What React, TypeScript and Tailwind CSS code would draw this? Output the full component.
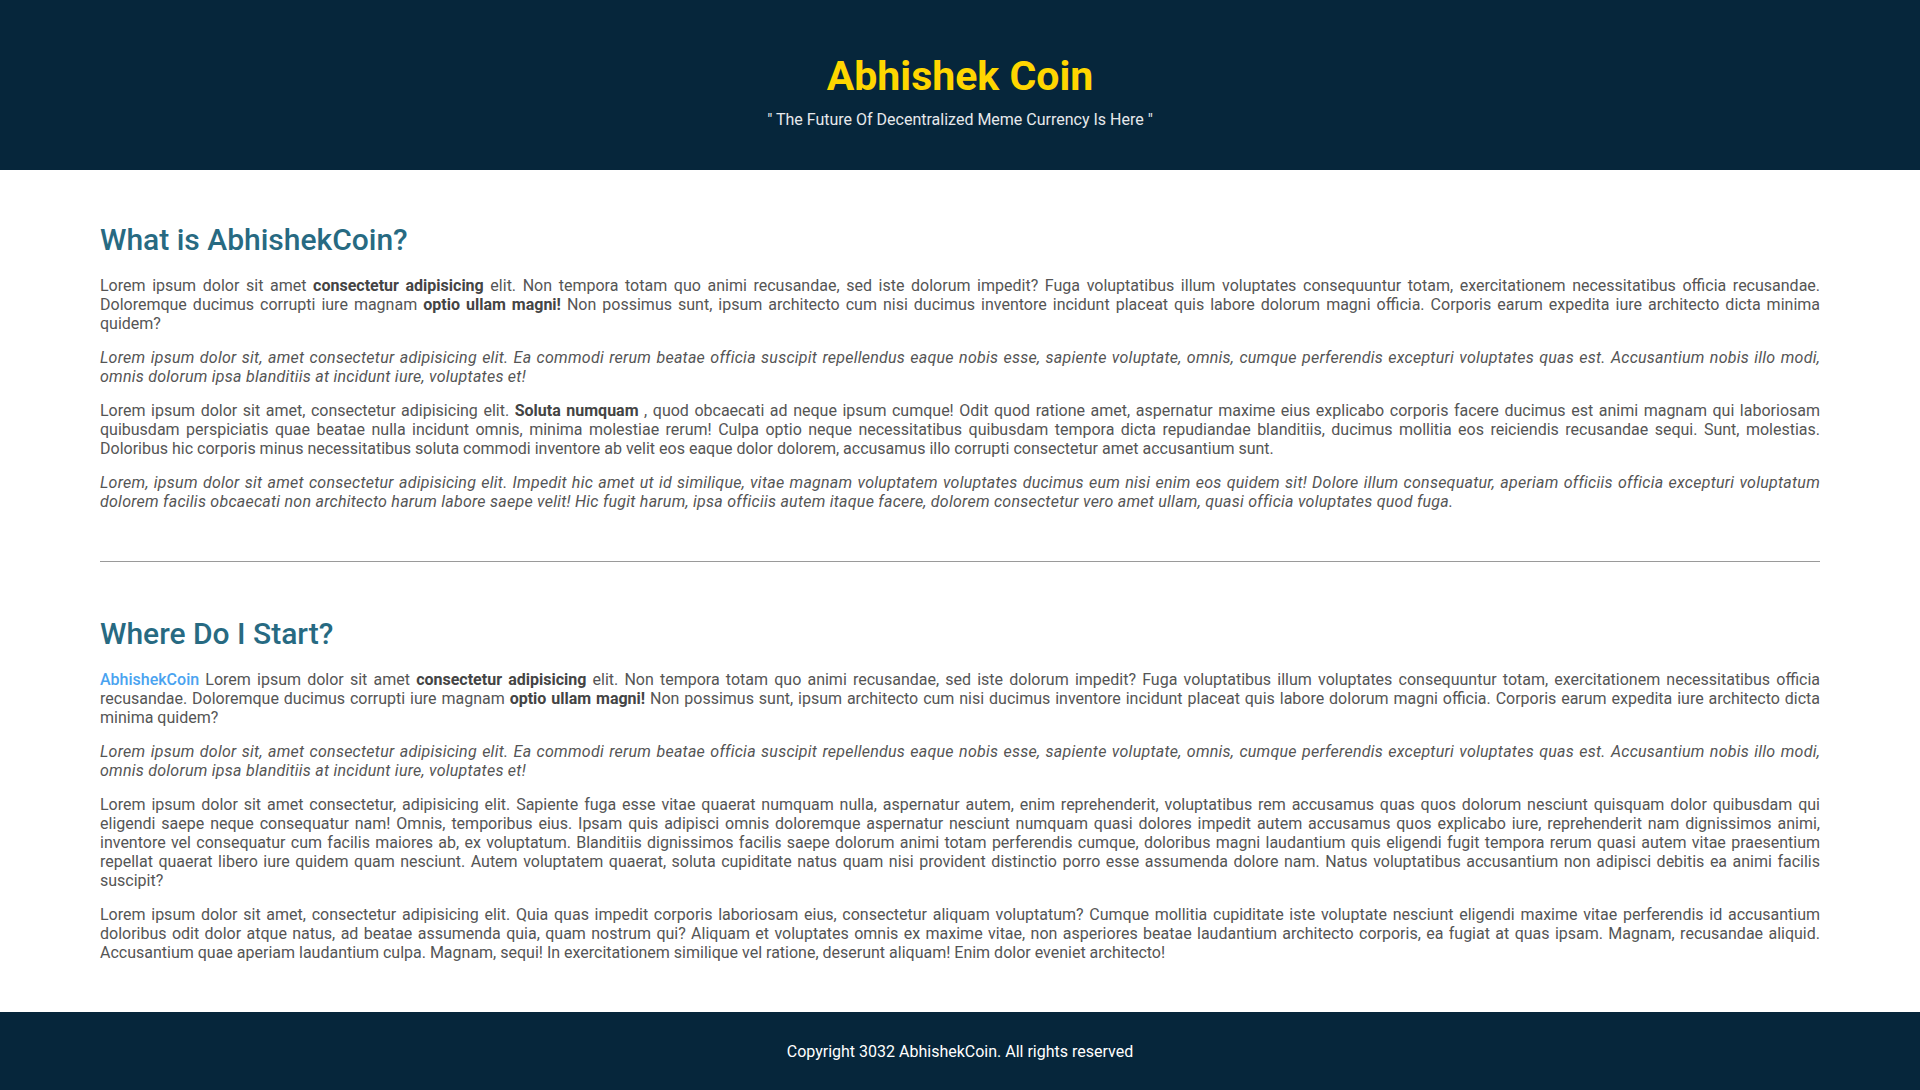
const p1a = "Lorem ipsum dolor sit amet";
const italicA =
  "Lorem ipsum dolor sit, amet consectetur adipisicing elit. Ea commodi rerum beatae officia suscipit repellendus eaque nobis esse, sapiente voluptate, omnis, cumque perferendis excepturi voluptates quas est. Accusantium nobis illo modi, omnis dolorum ipsa blanditiis at incidunt iure, voluptates et!";

function Para({ children, italic }: { children: React.ReactNode; italic?: boolean }) {
  return (
    <p
      className={
        "text-justify text-[16px] leading-[19px] text-[#555555] " + (italic ? "italic tracking-[0.25px]" : "")
      }
    >
      {children}
    </p>
  );
}

function B({ children }: { children: React.ReactNode }) {
  return <strong className="font-bold text-[#444444]">{children}</strong>;
}

export default function App() {
  return (
    <div className="min-h-[1090px] bg-white font-['Roboto','Liberation_Sans',sans-serif]">
      <header className="flex h-[170px] flex-col items-center bg-[#06263b] pt-[52px]">
        <h1 className="text-[41px] font-bold leading-[48px] text-[#ffd600]">Abhishek Coin</h1>
        <p className="mt-[10px] text-[16px] leading-[19px] text-[#e6e9ec]">
          " The Future Of Decentralized Meme Currency Is Here "
        </p>
      </header>

      <main className="px-[100px]">
        <section className="pb-[50px] pt-[52px]">
          <h2 className="mb-[18px] text-[30px] font-medium leading-[36px] text-[#276a82]">What is AbhishekCoin?</h2>
          <div className="flex flex-col gap-[15px]">
            <Para>
              {p1a} <B>consectetur adipisicing</B> elit. Non tempora totam quo animi recusandae, sed iste dolorum impedit? Fuga
              voluptatibus illum voluptates consequuntur totam, exercitationem necessitatibus officia recusandae. Doloremque
              ducimus corrupti iure magnam <B>optio ullam magni!</B> Non possimus sunt, ipsum architecto cum nisi ducimus
              inventore incidunt placeat quis labore dolorum magni officia. Corporis earum expedita iure architecto dicta minima
              quidem?
            </Para>
            <Para italic>{italicA}</Para>
            <Para>
              Lorem ipsum dolor sit amet, consectetur adipisicing elit. <B>Soluta numquam</B> , quod obcaecati ad neque ipsum
              cumque! Odit quod ratione amet, aspernatur maxime eius explicabo corporis facere ducimus est animi magnam qui
              laboriosam quibusdam perspiciatis quae beatae nulla incidunt omnis, minima molestiae rerum! Culpa optio neque
              necessitatibus quibusdam tempora dicta repudiandae blanditiis, ducimus mollitia eos reiciendis recusandae sequi.
              Sunt, molestias. Doloribus hic corporis minus necessitatibus soluta commodi inventore ab velit eos eaque dolor
              dolorem, accusamus illo corrupti consectetur amet accusantium sunt.
            </Para>
            <Para italic>
              Lorem, ipsum dolor sit amet consectetur adipisicing elit. Impedit hic amet ut id similique, vitae magnam
              voluptatem voluptates ducimus eum nisi enim eos quidem sit! Dolore illum consequatur, aperiam officiis officia
              excepturi voluptatum dolorem facilis obcaecati non architecto harum labore saepe velit! Hic fugit harum, ipsa
              officiis autem itaque facere, dolorem consectetur vero amet ullam, quasi officia voluptates quod fuga.
            </Para>
          </div>
        </section>

        <hr className="border-t border-[#9a9a9a]" />

        <section className="pb-[50px] pt-[54px]">
          <h2 className="mb-[18px] text-[30px] font-medium leading-[36px] text-[#276a82]">Where Do I Start?</h2>
          <div className="flex flex-col gap-[15px]">
            <Para>
              <a className="font-medium text-[#4aa3f0]">AbhishekCoin</a> {p1a} <B>consectetur adipisicing</B> elit. Non
              tempora totam quo animi recusandae, sed iste dolorum impedit? Fuga voluptatibus illum voluptates consequuntur
              totam, exercitationem necessitatibus officia recusandae. Doloremque ducimus corrupti iure magnam{" "}
              <B>optio ullam magni!</B> Non possimus sunt, ipsum architecto cum nisi ducimus inventore incidunt placeat quis
              labore dolorum magni officia. Corporis earum expedita iure architecto dicta minima quidem?
            </Para>
            <Para italic>{italicA}</Para>
            <Para>
              Lorem ipsum dolor sit amet consectetur, adipisicing elit. Sapiente fuga esse vitae quaerat numquam nulla,
              aspernatur autem, enim reprehenderit, voluptatibus rem accusamus quas quos dolorum nesciunt quisquam dolor
              quibusdam qui eligendi saepe neque consequatur nam! Omnis, temporibus eius. Ipsam quis adipisci omnis doloremque
              aspernatur nesciunt numquam quasi dolores impedit autem accusamus quos explicabo iure, reprehenderit nam
              dignissimos animi, inventore vel consequatur cum facilis maiores ab, ex voluptatum. Blanditiis dignissimos
              facilis saepe dolorum animi totam perferendis cumque, doloribus magni laudantium quis eligendi fugit tempora
              rerum quasi autem vitae praesentium repellat quaerat libero iure quidem quam nesciunt. Autem voluptatem quaerat,
              soluta cupiditate natus quam nisi provident distinctio porro esse assumenda dolore nam. Natus voluptatibus
              accusantium non adipisci debitis ea animi facilis suscipit?
            </Para>
            <Para>
              Lorem ipsum dolor sit amet, consectetur adipisicing elit. Quia quas impedit corporis laboriosam eius, consectetur
              aliquam voluptatum? Cumque mollitia cupiditate iste voluptate nesciunt eligendi maxime vitae perferendis id
              accusantium doloribus odit dolor atque natus, ad beatae assumenda quia, quam nostrum qui? Aliquam et voluptates
              omnis ex maxime vitae, non asperiores beatae laudantium architecto corporis, ea fugiat at quas ipsam. Magnam,
              recusandae aliquid. Accusantium quae aperiam laudantium culpa. Magnam, sequi! In exercitationem similique vel
              ratione, deserunt aliquam! Enim dolor eveniet architecto!
            </Para>
          </div>
        </section>
      </main>

      <footer className="flex h-[80px] items-center justify-center bg-[#06263b]">
        <p className="text-[16px] text-white">Copyright 3032 AbhishekCoin. All rights reserved</p>
      </footer>
    </div>
  );
}
